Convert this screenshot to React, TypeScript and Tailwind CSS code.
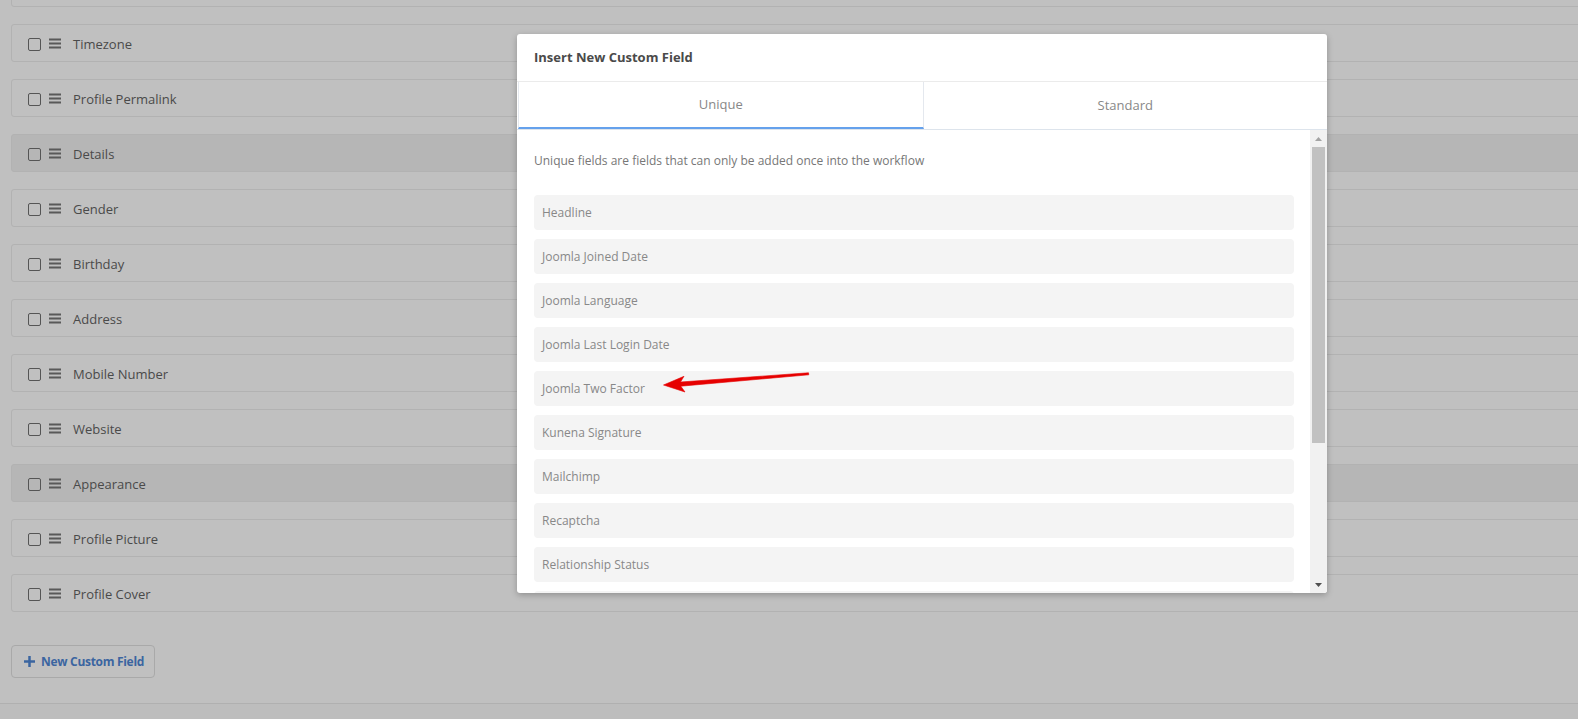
import React from "react";

type Row = { label: string; hl?: boolean };

const rows: Row[] = [
  { label: "" },
  { label: "Timezone" },
  { label: "Profile Permalink" },
  { label: "Details", hl: true },
  { label: "Gender" },
  { label: "Birthday" },
  { label: "Address" },
  { label: "Mobile Number" },
  { label: "Website" },
  { label: "Appearance", hl: true },
  { label: "Profile Picture" },
  { label: "Profile Cover" },
];

const items = [
  "Headline",
  "Joomla Joined Date",
  "Joomla Language",
  "Joomla Last Login Date",
  "Joomla Two Factor",
  "Kunena Signature",
  "Mailchimp",
  "Recaptcha",
  "Relationship Status",
  "",
];

function Hamburger() {
  return (
    <svg width="12" height="11" viewBox="0 0 12 11" className="shrink-0">
      <rect x="0" y="0.5" width="12" height="2" fill="#595959" />
      <rect x="0" y="4.5" width="12" height="2" fill="#595959" />
      <rect x="0" y="8.5" width="12" height="2" fill="#595959" />
    </svg>
  );
}

export default function App() {
  return (
    <div className="relative w-full h-[719px] overflow-hidden bg-[#c0c0c0] font-['Open_Sans',sans-serif]">
      {/* background page */}
      <div className="pl-[11px]">
        <div className="flex flex-col gap-[17px] mt-[-31px] -mr-6">
          {rows.map((r, i) => (
            <div
              key={i}
              className={`h-[38px] shrink-0 border border-[#b2b2b2] rounded-[3px] flex items-center pl-[16px] ${
                r.hl ? "bg-[#b6b6b6]" : "bg-[#c0c0c0]"
              }`}
            >
              {r.label && (
                <>
                  <div className="w-[13px] h-[13px] mt-[2px] border border-[#555] rounded-[2px] shrink-0" />
                  <div className="ml-[8px]">
                    <Hamburger />
                  </div>
                  <span className="ml-[12px] mt-[2px] text-[13px] text-[#4a4a4a] leading-none">{r.label}</span>
                </>
              )}
            </div>
          ))}
        </div>
        <div className="mt-[33px] w-[144px] h-[33px] border border-[#a9a9a9] rounded-[4px] flex items-center pl-[12px]">
          <svg width="11" height="11" viewBox="0 0 11 11" className="shrink-0">
            <rect x="4.25" y="0" width="2.5" height="11" fill="#3b65a0" />
            <rect x="0" y="4.25" width="11" height="2.5" fill="#3b65a0" />
          </svg>
          <span className="ml-[6px] text-[12px] font-bold text-[#3b65a0] leading-none tracking-[-0.3px]">
            New Custom Field
          </span>
        </div>
      </div>
      <div className="mt-[25px] border-t border-[#b0b0b0] h-[20px] bg-[#bdbdbd]" />

      {/* modal */}
      <div className="absolute left-[517px] top-[34px] w-[810px] h-[559px] bg-white rounded-[3px] shadow-[0_2px_6px_rgba(0,0,0,0.25)] flex flex-col overflow-hidden">
        <div className="h-[48px] shrink-0 flex items-center pl-[17px] pt-[1px] border-b border-[#ebebeb]">
          <span className="text-[13px] font-bold text-[#4a4a4a]">Insert New Custom Field</span>
        </div>
        <div className="h-[48px] shrink-0 flex border-b border-[#dde4ec]">
          <div className="flex-1 ml-[1px] border-l border-r border-[#e4e8ee] border-b-2 border-b-[#65a1ec] flex items-center justify-center text-[13px] text-[#888]">
            Unique
          </div>
          <div className="flex-1 flex items-center justify-center text-[13px] text-[#888]">Standard</div>
        </div>
        <div className="flex flex-1 min-h-0">
          <div className="flex-1 overflow-hidden pl-[17px] pr-[16px] pt-[22px]">
            <p className="text-[12px] leading-[17px] text-[#777]">
              Unique fields are fields that can only be added once into the workflow
            </p>
            <div className="mt-[26px] flex flex-col gap-[9px]">
              {items.map((it, i) => (
                <div
                  key={i}
                  className="h-[35px] shrink-0 bg-[#f4f4f4] rounded-[4px] flex items-center pl-[8px] text-[12px] text-[#888]"
                >
                  {it}
                </div>
              ))}
            </div>
          </div>
          <div className="w-[17px] shrink-0 bg-[#f1f1f1] flex flex-col">
            <div className="h-[17px] flex items-center justify-center">
              <svg width="7" height="4" viewBox="0 0 7 4">
                <polygon points="3.5,0 7,4 0,4" fill="#a3a3a3" />
              </svg>
            </div>
            <div className="h-[296px] mx-[2px] bg-[#c1c1c1]" />
            <div className="flex-1" />
            <div className="h-[17px] flex items-center justify-center">
              <svg width="7" height="4" viewBox="0 0 7 4">
                <polygon points="0,0 7,0 3.5,4" fill="#505050" />
              </svg>
            </div>
          </div>
        </div>
      </div>

      {/* red annotation arrow */}
      <svg className="absolute left-0 top-0 pointer-events-none" width="1578" height="719" viewBox="0 0 1578 719">
        <polygon
          points="663.5,385 684,376.3 680.5,382 808.5,372.8 808.8,374.8 680.8,386.2 685,392 "
          fill="#e60000"
          stroke="#e60000"
          strokeWidth="0.6"
          strokeLinejoin="round"
        />
      </svg>
    </div>
  );
}
